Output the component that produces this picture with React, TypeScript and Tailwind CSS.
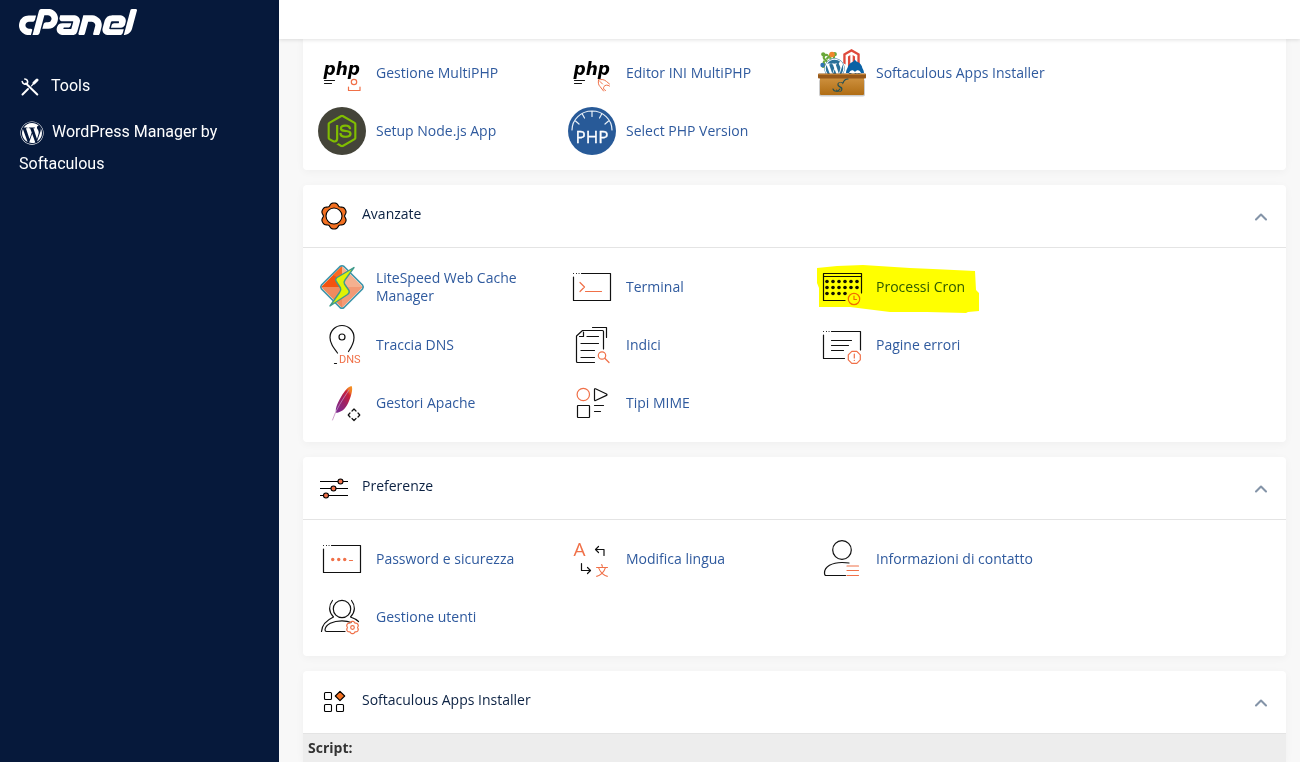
import { useState } from 'react';
import type { ReactNode } from 'react';
import { ChevronUp, ChevronDown } from 'lucide-react';
import { FaWordpress, FaJoomla, FaMagento, FaDrupal, FaNodeJs } from 'react-icons/fa';
import { SiCpanel } from 'react-icons/si';

const ORANGE = '#f07048';
const INK = '#111111';

interface Item {
  label: string;
  icon: ReactNode;
  highlighted?: boolean;
}

// Cog outline with six wide teeth and narrow rounded notches
function cogPath(c: number, r: number, notch: number): string {
  const points: string[] = [];
  for (let i = 0; i < 72; i++) {
    const t = (i / 72) * Math.PI * 2;
    const k = (1 - Math.cos(6 * (t - Math.PI / 2))) / 2;
    const d = r - notch * k * k;
    points.push(`${(c + d * Math.cos(t)).toFixed(2)} ${(c + d * Math.sin(t)).toFixed(2)}`);
  }
  return `M${points.join('L')}Z`;
}

function Glyph({ children }: { children: ReactNode }) {
  return (
    <svg viewBox="0 0 48 48" className="size-12 shrink-0" fill="none" stroke={INK} strokeWidth="1.2" strokeLinecap="round" strokeLinejoin="round" aria-hidden="true">
      {children}
    </svg>
  );
}

function PhpBase({ children }: { children: ReactNode }) {
  return (
    <Glyph>
      <text x="5.500" y="26" fontSize="17" fontWeight="700" fontStyle="italic" fontFamily="DejaVu Sans, sans-serif" fill="#000" stroke="none">php</text>
      <path d="M6.500 31.500h10M6.500 34.500h7" />
      {children}
    </Glyph>
  );
}

function ScreenBase({ children }: { children: ReactNode }) {
  return (
    <Glyph>
      <path d="M13.500 10.500h29v27h-37V14" />
      <path d="M5.500 10.500h.1M8.500 10.500h.1M11 10.500h.1" strokeWidth="1" />
      {children}
    </Glyph>
  );
}

const softwareItems: Item[] = [
  {
    label: 'Gestione MultiPHP',
    icon: (
      <PhpBase>
        <g stroke={ORANGE}>
          <circle cx="36" cy="33" r="2.700" />
          <path d="M30.500 38v3.500h11.500V38" />
        </g>
      </PhpBase>
    ),
  },
  {
    label: 'Editor INI MultiPHP',
    icon: (
      <PhpBase>
        <path stroke={ORANGE} strokeWidth="1" d="M30.500 31c3-1 6-.5 8 1.500l3 2.500M30.500 31c-.5 3 0 5 1.500 6.500l3.500 4.500M32 32.500l2.500 2.500M41.500 37c-2-1.500-4.500-1-5.500.5s-.5 3.500 1.500 4" />
      </PhpBase>
    ),
  },
  {
    label: 'Softaculous Apps Installer',
    icon: (
      <Glyph>
        <defs>
          <linearGradient id="crate" x1="0" y1="0" x2="0" y2="1">
            <stop offset="0" stopColor="#cf9240" />
            <stop offset="1" stopColor="#b06d14" />
          </linearGradient>
        </defs>
        <g stroke="none">
          <svg x="2" y="2" width="18" height="18"><FaJoomla size={18} color="#6aa83a" /></svg>
          <circle cx="14" cy="5.500" r="2.800" fill="#f0852d" />
          <circle cx="4.500" cy="16" r="2.200" fill="#2f74b5" />
          <svg x="24" y="0" width="19" height="19"><FaMagento size={19} color="#df4a3c" /></svg>
          <circle cx="16.500" cy="19" r="10" fill="#fff" />
          <svg x="6" y="9" width="21" height="21"><FaWordpress size={21} color="#2a7099" /></svg>
          <svg x="27" y="9" width="20" height="20"><FaDrupal size={20} color="#0a62a5" /></svg>
          <path fill="#0a62a5" d="M28 24c0-6 5-7 9-12 3 5 9 6 9 12z" />
          <path d="M31 24c1-3 4-4 6-1 2-3 5-2 6 1z" fill="#fff" />
          <rect x="1" y="30" width="46" height="17.500" rx="2" fill="#000" opacity=".2" />
          <rect x="2" y="28" width="44" height="18" rx="1" fill="url(#crate)" />
          <rect x="0" y="24.500" width="48" height="5" rx="1" fill="#96581a" />
          <path d="M1 25.500h46" stroke="#bd7c30" />
          <text x="18" y="42.500" fontSize="14" fontStyle="italic" fontFamily="Liberation Serif, serif" fill="#1f4f57">S</text>
          <path d="M15 40c1 3 5 3 7 0M25 34c1-3 2-4 5-4" stroke="#1f4f57" fill="none" />
        </g>
      </Glyph>
    ),
  },
  {
    label: 'Setup Node.js App',
    icon: (
      <Glyph>
        <circle cx="24" cy="24" r="24" fill="#444439" stroke="none" />
        <svg x="7.500" y="7.500" width="33" height="33" stroke="none"><FaNodeJs size={33} color="#80bd01" /></svg>
      </Glyph>
    ),
  },
  {
    label: 'Select PHP Version',
    icon: (
      <Glyph>
        <circle cx="24" cy="24" r="24" fill="#285a98" stroke="none" />
        <path d="M4 23a20 19 0 0 1 40 0M24 4v5.500M14 6.500l2.500 4.500M34 6.500l-2.500 4.500M7.500 14l3.500 3M40.500 14l-3.500 3" stroke="#e8f0f8" />
        <text x="24" y="36" textAnchor="middle" fontSize="17" fontFamily="Open Sans, sans-serif" fill="#fff" stroke="#fff" strokeWidth=".3">PHP</text>
      </Glyph>
    ),
  },
];

const advancedItems: Item[] = [
  {
    label: 'LiteSpeed Web Cache Manager',
    icon: (
      <Glyph>
        <g stroke="none">
          <path d="M24 3L3 24h21z" fill="#f4530f" />
          <path d="M24 3l21 21H24z" fill="#f5b08f" />
          <path d="M3 24l21 21V24z" fill="#f08a5e" />
          <path d="M45 24L24 45V24z" fill="#f39a76" />
          <path d="M24 3l-9 9 9 5z" fill="#fb6a22" />
        </g>
        <path d="M22 3.500q2-1.500 4 0L44.500 22q1.500 2 0 4L26 44.500q-2 1.500-4 0L3.500 26q-1.500-2 0-4z" stroke="#3a93a8" strokeWidth="1.600" />
        <path d="M36 4.500L19 14.500q-2 1.500-1 3.500l4.500 7q1 2-1 4.500L12 43l17.500-11.500q2.500-2 1.500-4l-4.500-6.500q-1-2 .5-4z" fill="#dff205" stroke="#3f9a8c" strokeWidth="1.400" />
      </Glyph>
    ),
  },
  {
    label: 'Terminal',
    icon: (
      <ScreenBase>
        <path stroke={ORANGE} d="M12 19.500l4.500 4.500L12 28.500M17.500 28.500h16" />
      </ScreenBase>
    ),
  },
  {
    label: 'Processi Cron',
    highlighted: true,
    icon: (
      <Glyph>
        <path d="M27 37.500H5.500v-27h38V30M5.500 13.500h38" />
        <g fill={INK} stroke="none">
          {[18.5, 24.5, 30.5].map((y, row) =>
            [9, 15, 21, 27, 33, 39].slice(0, row === 2 ? 4 : 6).map((x) => <circle key={`${x}-${y}`} cx={x} cy={y} r="1.800" />)
          )}
        </g>
        <g stroke={ORANGE}>
          <circle cx="36" cy="36" r="5.700" />
          <path d="M36 33v3.500h2.500" />
        </g>
      </Glyph>
    ),
  },
  {
    label: 'Traccia DNS',
    icon: (
      <Glyph>
        <path d="M19.500 32C15 26 12 22 12 16.500a12 12 0 0 1 24 0c0 5-2 9-5.500 14" />
        <circle cx="24" cy="16" r="3" />
        <path d="M16.500 42.500h2" />
        <text x="21" y="42" fontSize="11" fontFamily="Roboto, sans-serif" fill={ORANGE} stroke="none">DNS</text>
      </Glyph>
    ),
  },
  {
    label: 'Indici',
    icon: (
      <Glyph>
        <path d="M24.500 6.500h14v10M26.500 41.500h-17q-1 0-1-1V15l6-5.500h20q1 0 1 1V28M15.500 11v4.500h-4M19 15.500h11.500M13 22.500h17.500M13 29.500h13.500M13 36.500h13.500" />
        <g stroke={ORANGE}>
          <circle cx="34" cy="34.500" r="3.700" />
          <path d="M37 37.500l4 4" />
        </g>
      </Glyph>
    ),
  },
  {
    label: 'Pagine errori',
    icon: (
      <Glyph>
        <path d="M13.500 10.500h29V29M26.500 37.500h-21V14M13.500 19.500h20M13.500 24.500h17M13.500 29.500h12" />
        <path d="M5.500 10.500h.1M8.500 10.500h.1M11 10.500h.1" strokeWidth="1" />
        <path stroke={ORANGE} d="M33.800 30.300h5l3.500 3.500v5l-3.500 3.500h-5l-3.500-3.500v-5zM36.300 33v4M36.300 39.300v.1" />
      </Glyph>
    ),
  },
  {
    label: 'Gestori Apache',
    icon: (
      <Glyph>
        <defs>
          <linearGradient id="feather" x1="1" y1="0" x2="0.200" y2="1">
            <stop offset="0" stopColor="#f69923" />
            <stop offset="0.180" stopColor="#f07a26" />
            <stop offset="0.300" stopColor="#cb2138" />
            <stop offset="0.600" stopColor="#9e2064" />
            <stop offset="1" stopColor="#7e2b8e" />
          </linearGradient>
        </defs>
        <path d="M33.500 7c1.500 2 .5 8-2.500 15-2.500 6-5.500 10.500-12.500 12-2-3 .5-9 4.500-16 3.500-6 6.500-10 10.500-11z" fill="url(#feather)" stroke="none" />
        <path d="M31 11C25 20 18 30 14.500 41" stroke="#c48abf" strokeWidth=".8" />
        <path d="M34 32l2-2 2 2M34 39.500l2 2 2-2M32 34l-1.800 2 1.800 2M40 34l1.800 2-1.800 2" />
      </Glyph>
    ),
  },
  {
    label: 'Tipi MIME',
    icon: (
      <Glyph>
        <circle cx="15.300" cy="15.500" r="6.200" stroke={ORANGE} />
        <path d="M26.500 10.500q0-1 1-.7L38.500 15q1 .7 0 1.400L27.500 21.500q-1 .3-1-.7z" />
        <rect x="9.500" y="26.500" width="12" height="12" rx="0.500" />
        <path d="M26.500 26.500h9M26.500 32.500h6" />
      </Glyph>
    ),
  },
];

const preferenceItems: Item[] = [
  {
    label: 'Password e sicurezza',
    icon: (
      <ScreenBase>
        <g fill={ORANGE} stroke="none">
          <circle cx="14.700" cy="24.500" r="1.700" />
          <circle cx="20.700" cy="24.500" r="1.700" />
          <circle cx="26.700" cy="24.500" r="1.700" />
        </g>
        <path d="M31.500 25.500h3" stroke={ORANGE} />
      </ScreenBase>
    ),
  },
  {
    label: 'Modifica lingua',
    icon: (
      <Glyph>
        <path d="M36 20.500v-6h-8.500M30.500 11.500l-3 3 3 3M13.500 28.500v7h9M19.500 32.500l3 3-3 3" />
        <g fill={ORANGE} stroke="none">
          <text x="5.500" y="20.500" fontSize="19" fontFamily="Open Sans, sans-serif">A</text>
          <text x="27.500" y="39.500" fontSize="13" fontFamily="Noto Sans CJK SC, sans-serif">文</text>
        </g>
      </Glyph>
    ),
  },
  {
    label: 'Informazioni di contatto',
    icon: (
      <Glyph>
        <circle cx="24" cy="15" r="9.300" />
        <path d="M31 28c-2-.5-4.500-.5-7-.5-10 0-17.500 4-17.500 10.500 0 1.500 0 2.500 1.500 2.500h19.500" />
        <path d="M29 31h11.500M29 35.500h11.500M29 40.500h11.500" stroke={ORANGE} />
      </Glyph>
    ),
  },
  {
    label: 'Gestione utenti',
    icon: (
      <Glyph>
        <circle cx="24" cy="16" r="8.700" />
        <path d="M14.500 7.500c-4 5-4 11.500 1 16.500C9 27 4 31 3.500 38.500M33.500 7.500c4 5 4 11.500-1 16.500 3 1 6 2.500 8 4.500" />
        <path d="M33 29.500c-3-1.500-6-1.700-9-1.700-9 0-16.500 3.500-17 9 0 1.200.5 1.700 1.500 1.700H27" />
        <path d={cogPath(34.5, 6.2, 1.1)} stroke={ORANGE} />
        <circle cx="34.500" cy="34.500" r="1.800" stroke={ORANGE} />
      </Glyph>
    ),
  },
];

function HeaderIcon({ children }: { children: ReactNode }) {
  return (
    <svg viewBox="0 0 32 32" className="size-8 shrink-0" fill="none" stroke="#000" strokeWidth="1.1" strokeLinejoin="round" aria-hidden="true">
      {children}
    </svg>
  );
}

const gearIcon = (
  <HeaderIcon>
    <path d={cogPath(16, 13, 2.4)} fill="#f37021" />
    <circle cx="16" cy="16" r="8" fill="#fff" />
  </HeaderIcon>
);

const slidersIcon = (
  <HeaderIcon>
    <path d="M2 9.500h28M2 16.500h28M2 23.500h28" />
    <g fill={ORANGE}>
      <circle cx="22.500" cy="9.500" r="2.500" />
      <circle cx="15.500" cy="16.500" r="2.500" />
      <circle cx="8" cy="23.500" r="2.500" />
    </g>
  </HeaderIcon>
);

const appsIcon = (
  <HeaderIcon>
    <rect x="6.500" y="6.500" width="7" height="7" rx="1" />
    <rect x="6.500" y="18.500" width="7" height="7" rx="1" />
    <rect x="18.500" y="18.500" width="7" height="7" rx="1" />
    <path d="M22 5.300l4.700 4.700-4.700 4.700-4.700-4.700z" fill="#f37021" />
  </HeaderIcon>
);

function ItemLink({ item }: { item: Item }) {
  return (
    <a href="#" className="relative flex h-12 items-center gap-2.5 pr-4 text-sm leading-[18px] text-[#2f5a9e] hover:underline">
      {item.icon}
      <span>{item.label}</span>
      {item.highlighted && (
        <svg viewBox="-1 0 162 52" className="pointer-events-none absolute top-0 -left-px h-[52px] w-[162px] mix-blend-multiply" aria-hidden="true">
          <path fill="#ffff00" d="M-1 5L19 3L45 2L92 5L115 6L157 8L158 27L161 30L161 48L150 49L148 50L109 49L72 49L32 44L1 44L1 25L-1 20Z" />
        </svg>
      )}
    </a>
  );
}

function ItemGrid({ items }: { items: Item[] }) {
  return (
    <div className="grid grid-cols-[repeat(auto-fill,250px)] gap-y-2.5 p-[15px]">
      {items.map((item) => <ItemLink key={item.label} item={item} />)}
    </div>
  );
}

function Panel({ title, icon, children }: { title: string; icon: ReactNode; children: ReactNode }) {
  const [open, setOpen] = useState(true);

  return (
    <section className="rounded bg-white shadow-[0_2px_8px_rgba(0,0,0,0.04)]">
      <header className="flex h-[63px] items-center gap-3 border-b border-[#e4e4e4] px-[15px]">
        {icon}
        <h2 className="flex-1 pb-1 text-sm text-[#0b2142]">{title}</h2>
        <button type="button" aria-label={title} aria-expanded={open} onClick={() => setOpen(!open)} className="pt-0.5 text-[#8494a8]">
          {open ? <ChevronUp size={20} strokeWidth={2.5} /> : <ChevronDown size={20} strokeWidth={2.5} />}
        </button>
      </header>
      {open && children}
    </section>
  );
}

function ToolsIcon() {
  return (
    <svg viewBox="0 0 18 18" className="mr-3 ml-0.5 inline-block size-[18px] align-middle" fill="none" stroke="currentColor" strokeLinecap="round" aria-hidden="true">
      <path d="M5 5.500L16.300 16.500" strokeWidth="2" />
      <path d="M1.200 3.500a3 3 0 0 0 5 1.800M3.800 1a3 3 0 0 1 2.700 4" strokeWidth="1.600" />
      <path d="M1.500 16.500L7 11" strokeWidth="2" />
      <path d="M10.500 7.800L14 4" strokeWidth="1.200" />
      <path d="M13 5L16 2" strokeWidth="3" />
    </svg>
  );
}

export default function App() {
  return (
    <div className="flex min-h-screen bg-[#f8f8f8] font-['Open_Sans',sans-serif]">
      <aside className="w-[279px] shrink-0 bg-[#06193b] px-[19px] pt-[9px] font-['Roboto',sans-serif] text-white">
        <a href="#" aria-label="cPanel" className="block">
          <SiCpanel viewBox="0 9.4 24 5.2" className="h-[26px] w-[118px]" />
        </a>
        <nav className="mt-[35px] flex flex-col gap-3.5 pr-6 text-base leading-8">
          <a href="#" className="block"><ToolsIcon />Tools</a>
          <a href="#" className="block">
            <FaWordpress className="mr-2 ml-px inline-block size-6 align-middle" />
            WordPress Manager by Softaculous
          </a>
        </nav>
      </aside>

      <div className="flex min-w-0 flex-1 flex-col">
        <div className="relative z-10 h-[39px] shrink-0 bg-white shadow-[0_1px_4px_rgba(0,0,0,0.12)]" />
        <main className="flex flex-col gap-[15px] pr-3.5 pl-6">
          <section className="-mt-[5px] rounded bg-white shadow-[0_2px_8px_rgba(0,0,0,0.04)]">
            <ItemGrid items={softwareItems} />
          </section>
          <Panel title="Avanzate" icon={gearIcon}>
            <ItemGrid items={advancedItems} />
          </Panel>
          <Panel title="Preferenze" icon={slidersIcon}>
            <ItemGrid items={preferenceItems} />
          </Panel>
          <Panel title="Softaculous Apps Installer" icon={appsIcon}>
            <p className="bg-[#ededed] px-[5px] text-sm leading-7 font-bold text-[#333333]">Script:</p>
          </Panel>
        </main>
      </div>
    </div>
  );
}
